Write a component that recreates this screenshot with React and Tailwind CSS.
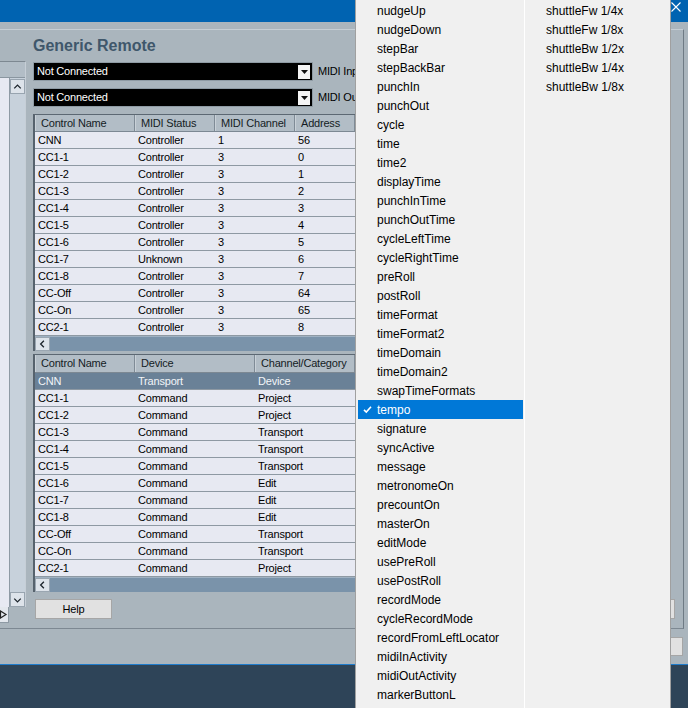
import React from 'react';

const table1Cols = [
  { label: 'Control Name', w: 'w-[100px]' },
  { label: 'MIDI Status', w: 'w-[80px]' },
  { label: 'MIDI Channel', w: 'w-[80px]' },
  { label: 'Address', w: 'w-[60px]' },
];

const table1Rows = [
  ['CNN', 'Controller', '1', '56'],
  ['CC1-1', 'Controller', '3', '0'],
  ['CC1-2', 'Controller', '3', '1'],
  ['CC1-3', 'Controller', '3', '2'],
  ['CC1-4', 'Controller', '3', '3'],
  ['CC1-5', 'Controller', '3', '4'],
  ['CC1-6', 'Controller', '3', '5'],
  ['CC1-7', 'Unknown', '3', '6'],
  ['CC1-8', 'Controller', '3', '7'],
  ['CC-Off', 'Controller', '3', '64'],
  ['CC-On', 'Controller', '3', '65'],
  ['CC2-1', 'Controller', '3', '8'],
];

const table2Cols = [
  { label: 'Control Name', w: 'w-[100px]' },
  { label: 'Device', w: 'w-[120px]' },
  { label: 'Channel/Category', w: 'w-[100px]' },
];

const table2Rows = [
  ['CNN', 'Transport', 'Device'],
  ['CC1-1', 'Command', 'Project'],
  ['CC1-2', 'Command', 'Project'],
  ['CC1-3', 'Command', 'Transport'],
  ['CC1-4', 'Command', 'Transport'],
  ['CC1-5', 'Command', 'Transport'],
  ['CC1-6', 'Command', 'Edit'],
  ['CC1-7', 'Command', 'Edit'],
  ['CC1-8', 'Command', 'Edit'],
  ['CC-Off', 'Command', 'Transport'],
  ['CC-On', 'Command', 'Transport'],
  ['CC2-1', 'Command', 'Project'],
];

const menuLeft = [
  'nudgeUp', 'nudgeDown', 'stepBar', 'stepBackBar', 'punchIn', 'punchOut', 'cycle',
  'time', 'time2', 'displayTime', 'punchInTime', 'punchOutTime', 'cycleLeftTime',
  'cycleRightTime', 'preRoll', 'postRoll', 'timeFormat', 'timeFormat2', 'timeDomain',
  'timeDomain2', 'swapTimeFormats', 'tempo', 'signature', 'syncActive', 'message',
  'metronomeOn', 'precountOn', 'masterOn', 'editMode', 'usePreRoll', 'usePostRoll',
  'recordMode', 'cycleRecordMode', 'recordFromLeftLocator', 'midiInActivity',
  'midiOutActivity', 'markerButtonL',
];

const menuRight = ['shuttleFw 1/4x', 'shuttleFw 1/8x', 'shuttleBw 1/2x', 'shuttleBw 1/4x', 'shuttleBw 1/8x'];

function Chevron({ dir }) {
  const d = {
    up: 'M3.5 8.5 L7 5 L10.5 8.5',
    down: 'M3.5 5.5 L7 9 L10.5 5.5',
    left: 'M8.5 3.5 L5 7 L8.5 10.5',
  }[dir];
  return (
    <svg width="14" height="14" viewBox="0 0 14 14">
      <path d={d} fill="none" stroke="#1b232b" strokeWidth="1.4" />
    </svg>
  );
}

function HScroll() {
  return (
    <div className="flex h-[15px] bg-[#7a93aa] border-t border-[#9fb1c2]">
      <div className="w-[15px] h-full flex items-center justify-center bg-[#dde3ea] border border-[#9aa6b1]">
        <Chevron dir="left" />
      </div>
    </div>
  );
}

function GridTable({ cols, rows, selected, headH }) {
  return (
    <div className="w-[322px] overflow-hidden border-t border-[#5c6873] border-l-2 border-l-[#56626d] bg-[#e7e9f2]">
      <div className={`flex ${headH} bg-[#b2bdc6] border-b border-[#7c8893]`}>
        {cols.map((c) => (
          <div
            key={c.label}
            className={`${c.w} shrink-0 h-full flex items-center pl-[5px] whitespace-nowrap border-r border-[#7f8b96] border-l border-l-[#c9d1d8] text-[#141c24]`}
          >
            {c.label}
          </div>
        ))}
        <div className="flex-1 border-l border-[#c9d1d8]" />
      </div>
      {rows.map((r, i) => (
        <div
          key={r[0]}
          className={`flex h-[17px] border-b border-[#8e99a3] ${
            i === selected ? 'bg-[#6a8197] text-[#f2f5f8]' : 'text-black'
          }`}
        >
          {cols.map((c, j) => (
            <div key={c.label} className={`${c.w} shrink-0 flex items-center pl-[3px] whitespace-nowrap`}>
              {r[j]}
            </div>
          ))}
        </div>
      ))}
      <HScroll />
    </div>
  );
}

function Dropdown({ label }) {
  return (
    <div className="flex items-center h-[19px]">
      <div className="w-[280px] h-full border border-[#8f9ba4] bg-black flex items-center justify-between pl-[3px] pr-[2px]">
        <span className="text-white">Not Connected</span>
        <div className="w-[12px] h-[14px] bg-[#f4f4f4] flex items-center justify-center">
          <svg width="7" height="4" viewBox="0 0 7 4">
            <polygon points="0,0 7,0 3.5,4" fill="#111" />
          </svg>
        </div>
      </div>
      <span className="ml-[5px] text-black whitespace-nowrap">{label}</span>
    </div>
  );
}

function LeftList() {
  return (
    <div className="w-[26px] mt-[31px] shrink-0 flex flex-col">
      <div className="border-t border-[#7d8891] border-r border-r-[#c6ced6]">
        <div className="h-[16px] bg-[#b2bdc6] border-b border-[#8a96a0]" />
        <div className="flex h-[529px]">
          <div className="w-[9px] bg-[#e7e9f2]" />
          <div className="w-[16px] flex flex-col bg-[#c7d1db] border-l border-[#8e9aa4]">
            <div className="h-[15px] mt-[1px] flex items-center justify-center bg-[#dde3ea] border border-[#98a4af]">
              <Chevron dir="up" />
            </div>
            <div className="flex-1" />
            <div className="h-[15px] flex items-center justify-center bg-[#dde3ea] border border-[#98a4af]">
              <Chevron dir="down" />
            </div>
          </div>
        </div>
      </div>
      <div className="flex h-[16px]">
        <div className="w-[9px] h-full bg-[#e3e7ed] border-r border-b border-[#8e9aa4] flex items-center">
          <svg width="8" height="9" viewBox="0 0 8 9">
            <path d="M0.5 1 L6 4.5 L0.5 8 Z" fill="none" stroke="#222" strokeWidth="1.2" />
          </svg>
        </div>
      </div>
    </div>
  );
}

function PopupMenu() {
  return (
    <div className="absolute top-0 left-[355px] w-[316px] h-[708px] bg-[#f0f0f0] border-l border-r border-[#a0a0a0] flex text-[12px] tracking-normal text-black">
      <div className="w-[168px] shrink-0 flex flex-col pt-[1px]">
        {menuLeft.map((item) =>
          item === 'tempo' ? (
            <div
              key={item}
              className="relative h-[19px] shrink-0 ml-[2px] mr-[1px] pl-[19px] flex items-center bg-[#0078d7] text-white"
            >
              <svg className="absolute left-[5px] top-[5px]" width="9" height="9" viewBox="0 0 9 9">
                <path d="M1 4.8 L3.3 7 L8 1.8" fill="none" stroke="#fff" strokeWidth="1.6" />
              </svg>
              {item}
            </div>
          ) : (
            <div key={item} className="h-[19px] shrink-0 pl-[21px] flex items-center">
              {item}
            </div>
          )
        )}
      </div>
      <div className="w-[1px] h-full bg-[#bdbdbd] border-r border-white" />
      <div className="flex-1 flex flex-col pt-[1px]">
        {menuRight.map((item) => (
          <div key={item} className="h-[19px] shrink-0 pl-[21px] flex items-center">
            {item}
          </div>
        ))}
      </div>
    </div>
  );
}

export default function App() {
  return (
    <div className="relative w-[688px] h-[708px] overflow-hidden bg-[#aab5bd] font-['Liberation_Sans',Arial,sans-serif] text-[11px] tracking-[-0.2px] flex flex-col">
      <div className="h-[22px] shrink-0 bg-[#0063b1] flex justify-end items-start pt-[2px] pr-[7px]">
        <svg width="10" height="10" viewBox="0 0 10 10">
          <path d="M0.5 0.5 L9.5 9.5 M9.5 0.5 L0.5 9.5" stroke="#fff" strokeWidth="1.1" />
        </svg>
      </div>

      <div className="mt-[7px] w-[684px] h-[600px] shrink-0 overflow-hidden border-t border-[#c5ced5] border-r border-r-[#6f7b85] border-b border-b-[#7d8892] flex gap-[7px]">
        <LeftList />
        <div className="flex-1 flex flex-col pt-[7px] pr-[8px]">
          <div className="h-[18px] leading-[18px] mb-[7px] text-[16px] font-bold tracking-normal text-[#3f576b]">
            Generic Remote
          </div>
          <div className="flex flex-col gap-[7px]">
            <Dropdown label="MIDI Input" />
            <Dropdown label="MIDI Output" />
          </div>
          <div className="mt-[7px]">
            <GridTable cols={table1Cols} rows={table1Rows} selected={-1} headH="h-[17px]" />
          </div>
          <div className="mt-[3px]">
            <GridTable cols={table2Cols} rows={table2Rows} selected={0} headH="h-[18px]" />
          </div>
          <div className="mt-[7px] flex justify-between">
            <button className="ml-[2px] w-[77px] h-[20px] bg-[#e1e1e1] border border-[#a6a6a6] text-black text-[11px]">
              Help
            </button>
            <button className="w-[80px] h-[20px] bg-[#e1e1e1] border border-[#a6a6a6]" />
          </div>
        </div>
      </div>

      <div className="h-[35px] w-[688px] shrink-0 flex justify-end items-start pt-[8px] pr-[5px]">
        <button className="w-[80px] h-[19px] bg-[#e1e1e1] border border-[#a6a6a6]" />
      </div>

      <div className="h-[1px] shrink-0 bg-[#1f7ccc]" />
      <div className="h-[43px] shrink-0 bg-[#2e4458]" />

      <PopupMenu />
    </div>
  );
}
